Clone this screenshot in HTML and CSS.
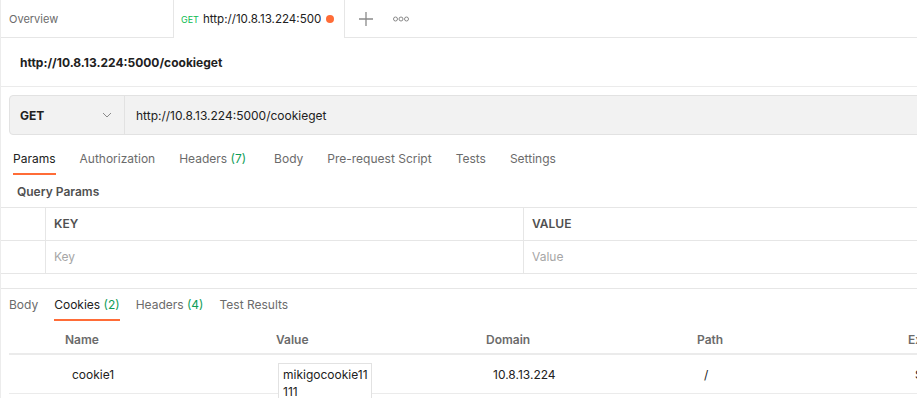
FILE: index.html
```html
<!DOCTYPE html>
<html>
	<head>
		<meta charset="utf-8">
		<title>cookieget</title>
		<link rel="stylesheet" href="styles.css">
	</head>
	<body>
		<div class="app">
			<div class="tabbar">
				<div class="tab tab-overview">Overview</div>
				<div class="tab tab-active">
					<span class="method-mini">GET</span>
					<span class="tab-url">http://10.8.13.224:5000/cookieget</span>
					<span class="dot"></span>
				</div>
				<div class="tab-rest">
					<svg class="icon-plus" width="14" height="14" viewBox="0 0 14 14"><path d="M7 0v14M0 7h14" stroke="#8a8a8a" stroke-width="1.3" fill="none"/></svg>
					<svg class="icon-more" width="16" height="6" viewBox="0 0 16 6"><circle cx="2.5" cy="3" r="2" stroke="#8a8a8a" stroke-width="1" fill="none"/><circle cx="8" cy="3" r="2" stroke="#8a8a8a" stroke-width="1" fill="none"/><circle cx="13.5" cy="3" r="2" stroke="#8a8a8a" stroke-width="1" fill="none"/></svg>
				</div>
			</div>

			<div class="title">http://10.8.13.224:5000/cookieget</div>

			<div class="urlbar">
				<div class="method">
					<span>GET</span>
					<svg width="10" height="6" viewBox="0 0 10 6"><path d="M1 1l4 4 4-4" stroke="#8a8a8a" stroke-width="1" fill="none"/></svg>
				</div>
				<div class="url">http://10.8.13.224:5000/cookieget</div>
			</div>

			<ul class="reqtabs">
				<li class="on">Params</li>
				<li>Authorization</li>
				<li>Headers <em>(7)</em></li>
				<li class="wide">Body</li>
				<li>Pre-request Script</li>
				<li>Tests</li>
				<li>Settings</li>
			</ul>

			<div class="section-label">Query Params</div>

			<div class="params">
				<div class="prow phead">
					<div class="pcheck"></div>
					<div class="pkey">KEY</div>
					<div class="pval">VALUE</div>
				</div>
				<div class="prow">
					<div class="pcheck"></div>
					<div class="pkey ph">Key</div>
					<div class="pval ph">Value</div>
				</div>
				<div class="pspacer"></div>
			</div>

			<div class="response">
				<ul class="restabs">
					<li>Body</li>
					<li class="on">Cookies <em>(2)</em></li>
					<li>Headers <em>(4)</em></li>
					<li>Test Results</li>
				</ul>

				<div class="cookies">
					<div class="crow chead">
						<div>Name</div>
						<div>Value</div>
						<div>Domain</div>
						<div>Path</div>
						<div>Expires</div>
					</div>
					<div class="crow cbody">
						<div>cookie1</div>
						<div class="cvalue"><div class="popbox">mikigocookie11111</div></div>
						<div>10.8.13.224</div>
						<div>/</div>
						<div>Session</div>
					</div>
				</div>
			</div>
		</div>
	</body>
</html>
```

FILE: styles.css
```css
*{
    padding:0;
    margin:0;
    list-style:none;
    box-sizing:border-box;
}
body{
    font-family:Inter, "Noto Sans", sans-serif;
    font-size:12px;
    color:#212121;
    background:#fff;
}
.app{
    width:917px;
    height:398px;
    overflow:hidden;
    border-left:1px solid #ececec;
}

/* top tabs */
.tabbar{
    display:flex;
    height:38px;
}
.tab{
    width:172px;
    display:flex;
    align-items:center;
    font-size:11px;
}
.tab-overview{
    padding-left:8px;
    color:#6b6b6b;
    border-bottom:1px solid #e6e6e6;
}
.tab-active{
    padding-left:7px;
    border-left:1px solid #e6e6e6;
    border-right:1px solid #e6e6e6;
}
.method-mini{
    font-size:9px;
    color:#0cbb52;
    margin-right:4px;
}
.tab-url{
    width:118px;
    white-space:nowrap;
    overflow:hidden;
    font-size:11.6px;
}
.dot{
    width:8px;
    height:8px;
    border-radius:50%;
    background:#ff6c37;
    margin-left:5px;
}
.tab-rest{
    flex:1;
    display:flex;
    align-items:center;
    border-bottom:1px solid #e6e6e6;
    padding-left:14px;
}
.icon-more{
    margin-left:20px;
}

/* title */
.title{
    height:49px;
    display:flex;
    align-items:center;
    padding-left:19px;
    font-weight:700;
    border-bottom:1px solid #ebebeb;
}

/* url bar */
.urlbar{
    display:flex;
    height:40px;
    margin:8px -4px 0 8px;
    background:#f2f2f2;
    border:1px solid #e2e2e2;
    border-radius:4px;
}
.method{
    width:115px;
    display:flex;
    align-items:center;
    justify-content:space-between;
    padding:0 12px 0 10px;
    font-weight:700;
    border-right:1px solid #e2e2e2;
}
.url{
    display:flex;
    align-items:center;
    padding-left:11px;
}

/* request tabs */
.reqtabs{
    display:flex;
    gap:24px;
    padding-left:12px;
    margin-top:12px;
    height:28px;
}
.reqtabs li,.restabs li{
    color:#6b6b6b;
    line-height:22px;
    border-bottom:2px solid transparent;
}
.reqtabs li{
    padding:1px 0 3px;
}
.restabs li{
    padding-bottom:3px;
}
.reqtabs li.wide{
    margin-left:4px;
}
.reqtabs li.on,.restabs li.on{
    color:#212121;
    border-color:#ff6c37;
}
em{
    font-style:normal;
    color:#0f9d58;
}
.section-label{
    padding:9px 0 0 16px;
    height:32px;
    font-weight:600;
    color:#505050;
}

/* params table */
.params{
    border-top:1px solid #e6e6e6;
}
.prow{
    display:flex;
    height:33px;
    border-bottom:1px solid #e6e6e6;
}
.pcheck{
    width:45px;
    border-right:1px solid #e6e6e6;
}
.pkey{
    width:478px;
    border-right:1px solid #e6e6e6;
}
.pkey,.pval{
    display:flex;
    align-items:center;
    padding:0 0 1px 8px;
}
.phead .pkey,.phead .pval{
    font-weight:600;
    color:#505050;
}
.ph{
    color:#a6a6a6;
}
.pspacer{
    height:14px;
}

/* response */
.response{
    border-top:1px solid #e6e6e6;
}
.restabs{
    display:flex;
    gap:16px;
    padding-left:8px;
    margin-top:5px;
    height:27px;
}
.cookies{
    margin-left:8px;
}
.crow{
    display:grid;
    grid-template-columns:211px 210px 211px 211px 211px;
    padding-left:56px;
    white-space:nowrap;
}
.chead{
    height:34px;
    align-items:center;
    padding-top:5px;
    font-weight:600;
    color:#6b6b6b;
    border-bottom:2px solid #ebebeb;
}
.cbody{
    height:39px;
    align-items:center;
    border-bottom:1px solid #ebebeb;
}
.cbody > div{
    padding-left:7px;
}
.cvalue{
    position:relative;
    height:100%;
}
.popbox{
    position:absolute;
    left:2px;
    top:8px;
    width:94px;
    height:60px;
    padding:2px 1px 0 4px;
    white-space:normal;
    word-break:break-all;
    line-height:17px;
    background:#fff;
    border:1px solid #e2e2e2;
}
```
